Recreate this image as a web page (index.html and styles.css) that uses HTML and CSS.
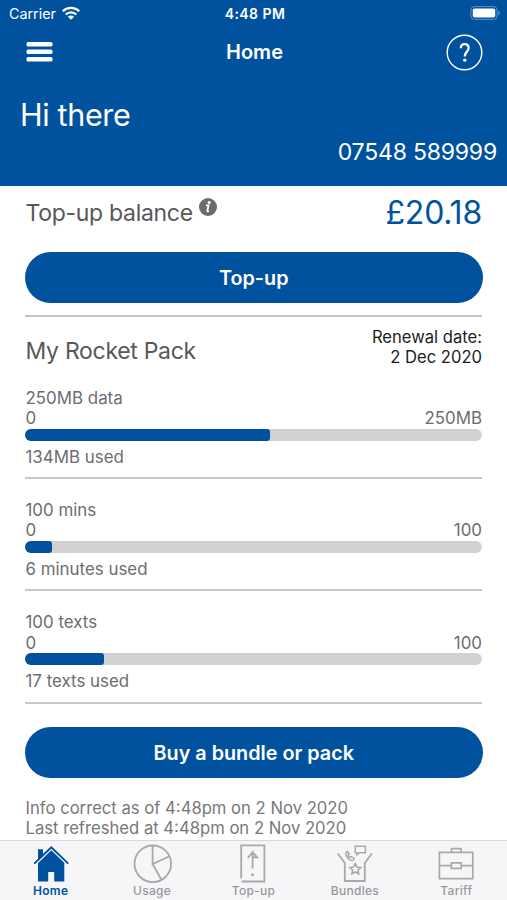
FILE: index.html
```html
<!DOCTYPE html>
<html lang="en">
<head>
<meta charset="utf-8">
<title>Home</title>
<link rel="stylesheet" href="styles.css">
</head>
<body>
<div class="app">
  <header class="header">
    <div class="status">
      <div class="status-left">
        <span class="carrier">Carrier</span>
        <svg class="wifi" width="18" height="14" viewBox="0 0 18 14"><g fill="none" stroke="#fff" stroke-width="2.3"><path d="M.8 5.2a11.6 11.6 0 0 1 16.4 0"/><path d="M3.7 8.5a7.5 7.5 0 0 1 10.6 0"/></g><path d="M9 13.8 5.9 10.7a4.4 4.4 0 0 1 6.2 0z" fill="#fff"/></svg>
      </div>
      <span class="time">4:48 PM</span>
      <svg class="battery" width="31" height="14" viewBox="0 0 31 14"><rect x=".9" y=".6" width="26.2" height="12.8" rx="3.6" fill="none" stroke="#5f92c4"/><rect x="2.8" y="2.5" width="22.4" height="9" rx="1.8" fill="#fff"/><path d="M28.4 4.6c1.9.7 1.9 4.1 0 4.8z" fill="#5f92c4"/></svg>
    </div>
    <div class="nav">
      <svg class="menu" width="27" height="20" viewBox="0 0 27 20" fill="#fff"><rect x=".5" y="0" width="26" height="4.6" rx="1.6"/><rect x=".5" y="7.5" width="26" height="4.6" rx="1.6"/><rect x=".5" y="15" width="26" height="4.6" rx="1.6"/></svg>
      <span class="title">Home</span>
      <svg class="help" width="37" height="37" viewBox="0 0 37 37" fill="none" stroke="#fff"><circle cx="18.5" cy="18.5" r="17.3" stroke-width="1.4"/><path d="M14.8 14.2c0-2.6 1.6-4 3.9-4s3.9 1.5 3.9 3.9c0 3.6-3.8 4-3.8 8.3" stroke-width="2.3"/><circle cx="18.8" cy="26.2" r="1.6" fill="#fff" stroke="none"/></svg>
    </div>
    <div class="greeting"><span>Hi there</span></div>
    <div class="phone"><span>07548 589999</span></div>
  </header>
  <main class="content">
    <section class="balance">
      <span class="balance-label">Top-up balance</span>
      <svg class="info" width="18" height="18" viewBox="0 0 18 18"><circle cx="9" cy="9" r="9" fill="#6c6c6e"/><circle cx="10.2" cy="4.4" r="1.5" fill="#fff"/><path d="M7 7.4h2.6L8.3 12.8q-.1 1 1.7.2" fill="none" stroke="#fff" stroke-width="1.8"/></svg>
      <span class="amount">£20.18</span>
    </section>
    <button class="btn">Top-up</button>
    <section class="pack">
      <span class="pack-name">My Rocket Pack</span>
      <span class="renewal"><span>Renewal date:</span><span>2 Dec 2020</span></span>
    </section>
    <section class="meter">
      <div class="line"><span>250MB data</span></div>
      <div class="line"><span>0</span><span>250MB</span></div>
      <div class="track"><div class="fill" style="width:53.6%"></div></div>
      <div class="used"><span>134MB used</span></div>
    </section>
    <section class="meter">
      <div class="line"><span>100 mins</span></div>
      <div class="line"><span>0</span><span>100</span></div>
      <div class="track"><div class="fill" style="width:6%"></div></div>
      <div class="used"><span>6 minutes used</span></div>
    </section>
    <section class="meter">
      <div class="line"><span>100 texts</span></div>
      <div class="line"><span>0</span><span>100</span></div>
      <div class="track"><div class="fill" style="width:17.2%"></div></div>
      <div class="used"><span>17 texts used</span></div>
    </section>
    <button class="btn btn-buy">Buy a bundle or pack</button>
    <footer class="note"><span>Info correct as of 4:48pm on 2 Nov 2020</span><span>Last refreshed at 4:48pm on 2 Nov 2020</span></footer>
  </main>
  <nav class="tabs">
    <a class="tab active">
      <svg width="40" height="39" viewBox="0 0 40 39"><path d="M7 17V4.2h5V11l8.3-7.8L33.3 16.3V36.5H23.2V27h-6v9.5H7z" fill="#00529f"/><path d="M3.2 20.6 20.3 4.2l17 16.4" fill="none" stroke="#f6f5f7" stroke-width="1.5"/><path d="M3.2 18.6 20.3 2.2l17 16.4" fill="none" stroke="#00529f" stroke-width="1.9"/></svg>
      <span>Home</span>
    </a>
    <a class="tab">
      <svg width="40" height="39" viewBox="0 0 40 39" fill="none" stroke="#a9a9ab" stroke-width="1.8"><circle cx="20.8" cy="18.8" r="18.3"/><path d="M20.6.8V19l17-7.7M20.6 19l8.8 15.8"/></svg>
      <span>Usage</span>
    </a>
    <a class="tab">
      <svg width="40" height="39" viewBox="0 0 40 39" fill="none" stroke="#a9a9ab" stroke-width="1.8"><path d="M8.2 33.5V.3h23.2v36.2H8.6"/><path d="M19.6 23.5V7.4l-4.8 5.5M19.6 7.4l4.6 5h-4.6"/><circle cx="19.6" cy="29.8" r="1.5" fill="#a9a9ab" stroke="none"/></svg>
      <span>Top-up</span>
    </a>
    <a class="tab">
      <svg width="40" height="39" viewBox="0 0 40 39" fill="none" stroke="#a9a9ab" stroke-width="1.8"><path d="M2.8 8.5 9.8 18v18h20V18l7-9.5"/><path d="m20.3 18.6 1.7 3.4 3.7.5-2.7 2.6.7 3.7-3.4-1.8-3.4 1.8.7-3.7-2.7-2.6 3.7-.5z" stroke-width="1.6"/><path d="M20.2 1.2h10.2v6.6h-6.2l-2.2 1.8V7.8h-1.8z" stroke-width="1.5"/><path d="M12.3 6.3c-1.7.8-1.8 3-.6 5.1 1.5 2.6 4.2 4.4 6.3 3.9l1.2-1.8-2.7-2-1.3.9c-1.1-.5-2-1.7-2.1-2.8l1.2-1z" stroke-width="1.4"/></svg>
      <span>Bundles</span>
    </a>
    <a class="tab">
      <svg width="40" height="39" viewBox="0 0 40 39" fill="none" stroke="#a9a9ab" stroke-width="1.7"><path d="M3.4 7.4h33.4v26.2H3.4zM15.5 7V3.6h9.6V7M3.4 20.6h12M25.2 20.6h11.6M15.4 17.8h9.8v5.6h-9.8z"/></svg>
      <span>Tariff</span>
    </a>
  </nav>
</div>
</body>
</html>
```
FILE: styles.css
```css
* { box-sizing: border-box; }
body { margin: 0; font-family: Inter, "Liberation Sans", sans-serif; background: #fff; }
.app { width: 507px; height: 900px; display: flex; flex-direction: column; overflow: hidden; }
svg { display: block; flex: none; overflow: visible; }
span { white-space: nowrap; }

.header { height: 186px; flex: none; background: #00529f; color: #fff; }
.status { height: 28px; display: grid; grid-template-columns: 1fr auto 1fr; align-items: center; padding: 0 6px 2px 9px; }
.status-left { display: flex; align-items: center; gap: 6px; }
.carrier { font-size: 14.3px; }
.time { font-size: 14px; font-weight: 600; letter-spacing: .45px; }
.battery { justify-self: end; }
.nav { height: 48px; display: grid; grid-template-columns: 1fr auto 1fr; align-items: center; padding: 0 24px 0 26px; }
.title { font-size: 20px; font-weight: 600; }
.help { justify-self: end; }
.greeting { height: 76px; display: flex; align-items: center; padding-left: 20px; font-size: 30.5px; font-weight: 400; letter-spacing: -.35px; }
.phone { display: flex; justify-content: flex-end; padding-right: 10px; font-size: 23px; line-height: 28px; margin-top: -14px; font-weight: 400; letter-spacing: -.2px; }

.content { flex: 1; min-height: 0; padding: 0 25px; overflow: hidden; color: #6c6d70; }
.balance { height: 65.5px; display: flex; align-items: flex-start; color: #58585a; }
.balance-label { font-size: 23px; line-height: 28px; margin: 12.5px 0 0 .5px; font-weight: 400; letter-spacing: -.3px; }
.info { margin: 12px 0 0 6px; }
.amount { margin: 8.5px 0 0 auto; font-size: 32px; line-height: 36px; font-weight: 400; letter-spacing: -.2px; color: #00529f; }
.btn { display: block; width: 457.5px; height: 51px; border: 0; border-radius: 26px; background: #00529f; color: #fff; font: 600 19.8px/24px Inter, "Liberation Sans", sans-serif; padding: 1px 0 0; text-align: center; }
.pack { margin-top: 12px; height: 73px; border-top: 2px solid #c4c4c6; display: flex; justify-content: space-between; align-items: flex-start; }
.pack-name { font-size: 23px; line-height: 28px; margin: 20.5px 0 0 .5px; color: #58585a; font-weight: 400; letter-spacing: -.3px; }
.renewal { margin-top: 10px; display: flex; flex-direction: column; align-items: flex-end; font-size: 16.6px; line-height: 20.5px; color: #1c1c1e; }
.meter { height: 112.4px; border-bottom: 2px solid #c8c8ca; padding-top: 21.1px; font-size: 16.9px; }
.meter:nth-of-type(3) { height: 91.3px; padding-top: 0; }
.line { display: flex; justify-content: space-between; height: 20.6px; line-height: 21px; padding-left: .5px; }
.track { height: 12px; border-radius: 6px; overflow: hidden; background: #d2d2d3; }
.fill { height: 100%; border-radius: 0 3px 3px 0; background: #00529f; }
.used { line-height: 22px; padding: 5px 0 0 .5px; }
.btn-buy { margin-top: 23px; }
.note { display: flex; flex-direction: column; margin-top: 20px; padding-left: .5px; font-size: 16.65px; line-height: 20.7px; color: #77787a; }

.tabs { height: 60px; flex: none; display: grid; grid-template-columns: repeat(5, 1fr); background: #f6f5f7; border-top: 1px solid #d9d9dc; }
.tab { display: flex; flex-direction: column; align-items: center; padding-top: 3.5px; color: #98989b; font-size: 12px; font-weight: 500; line-height: 13px; letter-spacing: .3px; }
.tab.active { color: #00529f; font-weight: 600; }
```
